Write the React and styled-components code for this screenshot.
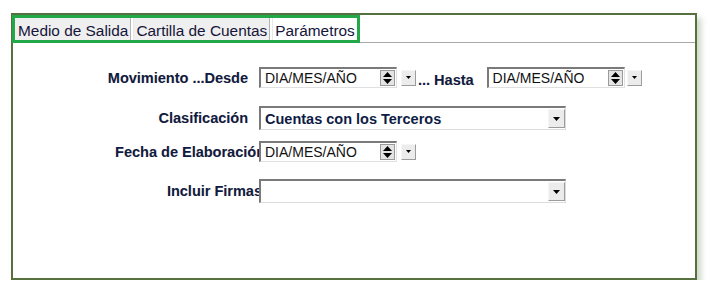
import React from 'react';
import styled, { createGlobalStyle } from 'styled-components';

const GlobalStyle = createGlobalStyle`
  body {
    margin: 0;
    background: #ffffff;
    font-family: "Liberation Sans", Arial, sans-serif;
  }
`;

const Frame = styled.div`
  margin: 13px 0 0 11px;
  width: 682px;
  height: 263px;
  border: 2px solid #56703f;
  box-shadow: 4px 5px 6px rgba(110, 140, 90, 0.35);
  background: #fff;
`;

const TabStrip = styled.div`
  display: flex;
  height: 27px;
  border-bottom: 1px solid #a8a8a8;
`;

const TabGroup = styled.div`
  display: flex;
  border: 3px solid #23a849;
  margin-left: -1px;
  height: 22px;
`;

const Tab = styled.div`
  display: flex;
  align-items: center;
  padding: 3px 2px 0 2px;
  font-size: 15.4px;
  color: #15153a;
  background: ${p => (p.$active ? '#ffffff' : '#efefef')};
  border-right: ${p => (p.$active ? 'none' : '1px solid #b4b4b4')};
  border-left: 1px solid ${p => (p.$first ? 'transparent' : '#e8e8e8')};
  margin-right: ${p => (p.$active ? '0' : '2px')};
`;

const Form = styled.div`
  display: grid;
  grid-template-columns: 246px auto;
  padding-top: 24px;
`;

const Label = styled.div`
  display: flex;
  align-items: center;
  justify-content: flex-end;
  padding-right: ${p => p.$pad}px;
  margin-right: ${p => p.$over || 0}px;
  height: ${p => p.$h}px;
  margin-bottom: ${p => p.$mb}px;
  font-size: 14.5px;
  font-weight: bold;
  color: #0e1c45;
  white-space: nowrap;
  text-shadow: 0.4px 0 0 rgba(200, 120, 40, 0.35);
`;

const Controls = styled.div`
  position: relative;
  z-index: 1;
  display: flex;
  align-items: center;
  height: ${p => p.$h}px;
  margin-bottom: ${p => p.$mb}px;
`;

const DateBox = styled.div`
  display: flex;
  align-items: center;
  justify-content: space-between;
  width: 131px;
  height: 18px;
  padding-left: 4px;
  background: #fff;
  border-top: 2px solid #7a7a7a;
  border-left: 2px solid #7a7a7a;
  border-bottom: 1px solid #e0e0e0;
  border-right: 1px solid #e0e0e0;
  font-size: 14px;
  color: #111;
  white-space: nowrap;
`;

const Spinner = styled.div`
  width: 15px;
  height: 16px;
  margin-right: 1px;
  background: #e4e4e4;
  border: 1px solid #9a9a9a;
  box-sizing: border-box;
  display: flex;
  align-items: center;
  justify-content: center;
`;

const DropBtn = styled.div`
  width: ${p => p.$w}px;
  height: ${p => p.$h}px;
  margin-left: ${p => p.$ml};
  box-sizing: border-box;
  background: #ececec;
  border: 1px solid #9c9c9c;
  border-top-color: #f6f6f6;
  border-left-color: #f6f6f6;
  display: flex;
  align-items: center;
  justify-content: center;
  flex-shrink: 0;
`;

const Hasta = styled.span`
  font-size: 14.5px;
  font-weight: bold;
  color: #0e1c45;
  margin: 4px 13px 0 2px;
  white-space: nowrap;
  text-shadow: 0.4px 0 0 rgba(200, 120, 40, 0.35);
`;

const SelectBox = styled.div`
  display: flex;
  align-items: center;
  width: 300px;
  height: 21px;
  padding-left: 4px;
  background: #fff;
  border-top: 2px solid #7a7a7a;
  border-left: 2px solid #7a7a7a;
  border-bottom: 1px solid #dcdcdc;
  border-right: 1px solid #dcdcdc;
  font-size: 14.5px;
  font-weight: bold;
  color: #0e1c45;
  white-space: nowrap;
`;

const Arrow = ({ size = 5 }) => (
  <svg width={size * 2 - 1} height={size} viewBox={`0 0 ${size * 2 - 1} ${size}`}>
    <path d={`M0 0 H${size * 2 - 1} L${size - 0.5} ${size} Z`} fill="#000" />
  </svg>
);

const UpDown = () => (
  <svg width="9" height="12" viewBox="0 0 9 12">
    <path d="M4.5 0 L9 5 H0 Z" fill="#000" />
    <path d="M0 7 H9 L4.5 12 Z" fill="#000" />
  </svg>
);

const DateField = ({ dropGap = 4 }) => (
  <>
    <DateBox>
      DIA/MES/AÑO
      <Spinner>
        <UpDown />
      </Spinner>
    </DateBox>
    <DropBtn $w={15} $h={16} $ml={`${dropGap}px`}>
      <Arrow size={3} />
    </DropBtn>
  </>
);

const Select = ({ value }) => (
  <SelectBox>
    {value}
    <DropBtn $w={17} $h={19} $ml="auto">
      <Arrow size={4} />
    </DropBtn>
  </SelectBox>
);

export default function App() {
  return (
    <>
      <GlobalStyle />
      <Frame>
        <TabStrip>
          <TabGroup>
            <Tab $first>Medio de Salida</Tab>
            <Tab>Cartilla de Cuentas</Tab>
            <Tab $active>Parámetros</Tab>
          </TabGroup>
        </TabStrip>
        <Form>
          <Label $pad={11} $h={21} $mb={18}>Movimiento ...Desde</Label>
          <Controls $h={21} $mb={18}>
            <DateField />
            <Hasta>... Hasta</Hasta>
            <DateField dropGap={2} />
          </Controls>

          <Label $pad={11} $h={24} $mb={11}>Clasificación</Label>
          <Controls $h={24} $mb={11}>
            <Select value="Cuentas con los Terceros" />
          </Controls>

          <Label $pad={0} $over={-6} $h={21} $mb={17}>Fecha de Elaboración</Label>
          <Controls $h={21} $mb={17}>
            <DateField />
          </Controls>

          <Label $pad={0} $over={-3} $h={24} $mb={0}>Incluir Firmas</Label>
          <Controls $h={24} $mb={0}>
            <Select value="" />
          </Controls>
        </Form>
      </Frame>
    </>
  );
}
